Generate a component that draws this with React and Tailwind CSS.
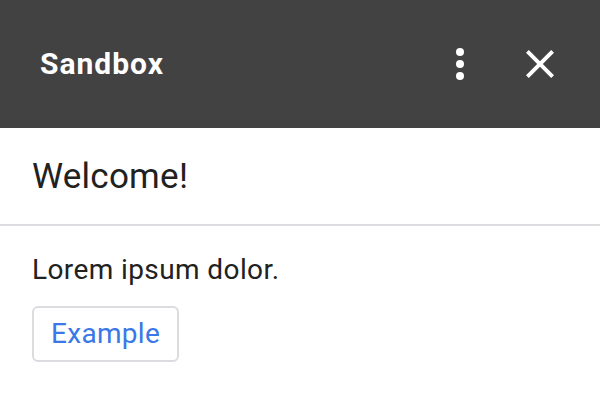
function MoreVert() {
  return (
    <svg width="48" height="48" viewBox="0 0 24 24" fill="currentColor">
      <circle cx="12" cy="6" r="2" />
      <circle cx="12" cy="12" r="2" />
      <circle cx="12" cy="18" r="2" />
    </svg>
  );
}

function Close() {
  return (
    <svg width="48" height="48" viewBox="0 0 24 24" fill="currentColor">
      <path d="M19 6.41 17.59 5 12 10.59 6.41 5 5 6.41 10.59 12 5 17.59 6.41 19 12 13.41 17.59 19 19 17.59 13.41 12z" />
    </svg>
  );
}

export default function App() {
  return (
    <div className="w-[600px] h-[418px] bg-white font-['Roboto',sans-serif] text-[#212121]">
      {/* Header */}
      <div className="h-[128px] bg-[#424242] flex items-center pl-[40px] pr-[36px]">
        <h1 className="text-[30px] tracking-[1px] font-bold text-white flex-1 pb-[1px]">Sandbox</h1>
        <div className="flex items-center gap-[32px] text-white">
          <MoreVert />
          <Close />
        </div>
      </div>

      {/* Title */}
      <div className="h-[98px] border-b-2 border-[#dadce0] flex items-center px-[32px]">
        <h2 className="text-[35px] tracking-[0.25px] pt-[2px]">Welcome!</h2>
      </div>

      {/* Body */}
      <div className="px-[32px] pt-[26px]">
        <p className="text-[28px] tracking-[0.4px] leading-[36px]">Lorem ipsum dolor.</p>
        <button className="mt-[18px] h-[56px] px-[17px] border-2 border-[#dadce0] rounded-[6px] text-[28px] tracking-[0.3px] text-[#3b78e7]">
          Example
        </button>
      </div>
    </div>
  );
}
